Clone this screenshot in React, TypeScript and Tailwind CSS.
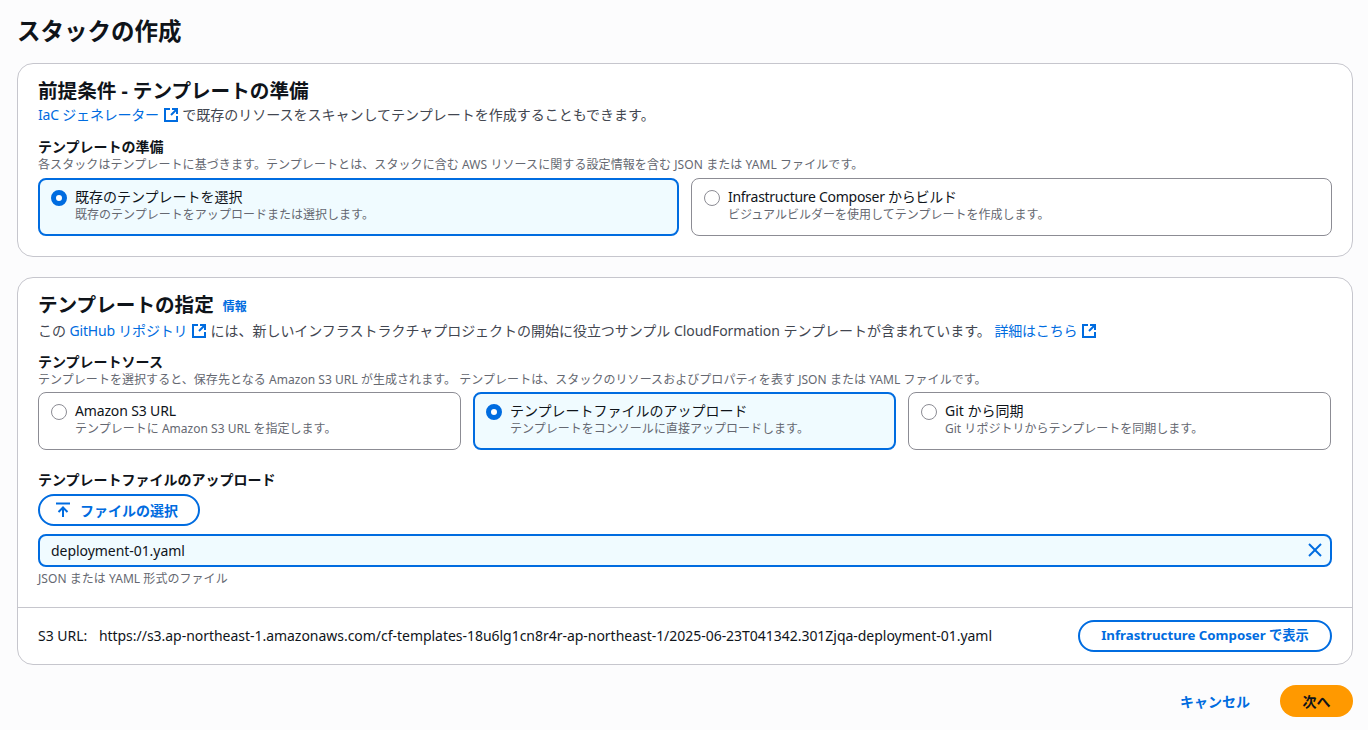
const font = { fontFamily: '"Noto Sans", "Noto Sans CJK JP", sans-serif' };

function ExternalIcon() {
  return (
    <svg viewBox="0 0 16 16" className="inline-block size-4 align-[-3px] text-[#006ce0]" fill="none" stroke="currentColor" strokeWidth="2">
      <path d="M7 2H2v12h12V9" />
      <path d="M9 2h5v5" />
      <path d="M14 2 8 8" />
    </svg>
  );
}

function Link({ children }: { children: React.ReactNode }) {
  return <span className="tracking-[-0.2px] text-[#006ce0]">{children}</span>;
}

function Radio({ checked }: { checked: boolean }) {
  return checked ? (
    <span className="mt-[3px] size-4 shrink-0 rounded-full border-[5px] border-[#006ce0] bg-white" />
  ) : (
    <span className="mt-[3px] size-4 shrink-0 rounded-full border border-[#8c8c94] bg-white" />
  );
}

function Tile({ title, desc, checked, titleClass = "" }: { title: string; desc: string; checked?: boolean; titleClass?: string }) {
  return (
    <div
      className={
        checked
          ? "flex h-[58px] min-w-0 flex-1 gap-2 rounded-lg border-2 border-[#006ce0] bg-[#f0fbff] px-[11px] pt-[7px]"
          : "flex h-[58px] min-w-0 flex-1 gap-2 rounded-lg border border-[#8c8c94] bg-white px-3 pt-2"
      }
    >
      <Radio checked={!!checked} />
      <div>
        <div className={"text-[14px] leading-[20px] text-[#0f141a] " + titleClass}>{title}</div>
        <div className="text-[12px] leading-[16px] tracking-[0.02px] text-[#656871]">{desc}</div>
      </div>
    </div>
  );
}

function PillButton({ children, className }: { children: React.ReactNode; className: string }) {
  return (
    <div className={"flex h-8 items-center justify-center rounded-full border-2 border-[#006ce0] bg-white font-bold text-[#006ce0] " + className}>
      {children}
    </div>
  );
}

export default function App() {
  return (
    <div className="min-h-[730px] bg-[#fcfcfd] pl-[17px] pr-[15px] pt-[14px]" style={font}>
      <h1 className="text-[23.5px] font-bold leading-[34px] text-[#0f141a]">スタックの作成</h1>

      <section className="mt-[15px] h-[194px] rounded-2xl border border-[#c6c6cd] bg-white px-5 pt-[14px]">
        <h2 className="text-[19.6px] font-bold leading-[26px] text-[#0f141a]">前提条件 - テンプレートの準備</h2>
        <p className="mt-px text-[14px] leading-[20px] text-[#424650]">
          <Link>IaC ジェネレーター</Link> <ExternalIcon /> で既存のリソースをスキャンしてテンプレートを作成することもできます。
        </p>
        <div className="mt-[13px] text-[14px] font-bold leading-[18px] text-[#0f141a]">テンプレートの準備</div>
        <p className="mt-px text-[12px] leading-[16px] tracking-[0.08px] text-[#656871]">
          各スタックはテンプレートに基づきます。テンプレートとは、スタックに含む AWS リソースに関する設定情報を含む JSON または YAML ファイルです。
        </p>
        <div className="mt-[5px] flex gap-3">
          <Tile checked title="既存のテンプレートを選択" desc="既存のテンプレートをアップロードまたは選択します。" />
          <Tile titleClass="tracking-[-0.28px]" title="Infrastructure Composer からビルド" desc="ビジュアルビルダーを使用してテンプレートを作成します。" />
        </div>
      </section>

      <section className="mt-5 h-[388px] rounded-2xl border border-[#c6c6cd] bg-white">
        <div className="h-[330px] border-b border-[#c6c6cd] px-5 pt-[14px]">
          <h2 className="text-[19.6px] font-bold leading-[26px] text-[#0f141a]">
            テンプレートの指定 <span className="ml-1 align-[1px] text-[12px] font-bold text-[#006ce0]">情報</span>
          </h2>
          <p className="mt-px text-[14px] leading-[20px] tracking-[-0.03px] text-[#424650]">
            この <Link>GitHub リポジトリ</Link> <ExternalIcon /> には、新しいインフラストラクチャプロジェクトの開始に役立つサンプル CloudFormation テンプレートが含まれています。 <Link>詳細はこちら</Link> <ExternalIcon />
          </p>
          <div className="mt-[12px] text-[14px] font-bold leading-[18px] text-[#0f141a]">テンプレートソース</div>
          <p className="mt-px text-[12px] leading-[16px] tracking-[0.05px] text-[#656871]">
            テンプレートを選択すると、保存先となる Amazon S3 URL が生成されます。 テンプレートは、スタックのリソースおよびプロパティを表す JSON または YAML ファイルです。
          </p>
          <div className="mt-[4px] flex gap-3 pr-px">
            <Tile titleClass="tracking-[-0.15px]" title="Amazon S3 URL" desc="テンプレートに Amazon S3 URL を指定します。" />
            <Tile checked title="テンプレートファイルのアップロード" desc="テンプレートをコンソールに直接アップロードします。" />
            <Tile title="Git から同期" desc="Git リポジトリからテンプレートを同期します。" />
          </div>
          <div className="mt-5 text-[14px] font-bold leading-[20px] text-[#0f141a]">テンプレートファイルのアップロード</div>
          <PillButton className="mt-1 w-[162px] gap-[9px] pr-[5px] text-[14px]">
            <svg viewBox="0 0 16 16" className="size-4" fill="none" stroke="currentColor" strokeWidth="2">
              <path d="M1 1.5h14" />
              <path d="M8 15V6" />
              <path d="M3.5 10 8 5.5l4.5 4.5" />
            </svg>
            ファイルの選択
          </PillButton>
          <div className="mt-2 flex h-[33px] items-center justify-between rounded-lg border-2 border-[#006ce0] bg-[#f0fbff] pb-px pl-[11px] pr-[7px] text-[14px] tracking-[-0.05px] text-[#0f141a]">
            deployment-01.yaml
            <svg viewBox="0 0 16 16" className="size-4 text-[#006ce0]" fill="none" stroke="currentColor" strokeWidth="2">
              <path d="m2 2 12 12" />
              <path d="M14 2 2 14" />
            </svg>
          </div>
          <p className="mt-[4px] text-[12px] leading-[16px] tracking-[0.05px] text-[#656871]">JSON または YAML 形式のファイル</p>
        </div>
        <div className="flex h-[56px] items-center justify-between px-5 text-[14px] text-[#0f141a]">
          <span className="pb-0.5">
            S3 URL:<span className="ml-[11.5px] tracking-[-0.03px]">https://s3.ap-northeast-1.amazonaws.com/cf-templates-18u6lg1cn8r4r-ap-northeast-1/2025-06-23T041342.301Zjqa-deployment-01.yaml</span>
          </span>
          <PillButton className="w-[254px] text-[13.25px]">Infrastructure Composer で表示</PillButton>
        </div>
      </section>

      <div className="mt-5 flex items-center justify-end gap-[30px]">
        <span className="text-[14px] font-bold text-[#006ce0]">キャンセル</span>
        <div className="flex h-8 w-[73px] items-center justify-center rounded-full bg-[#ff9900] text-[14px] font-bold text-[#0f141a]">次へ</div>
      </div>
    </div>
  );
}
